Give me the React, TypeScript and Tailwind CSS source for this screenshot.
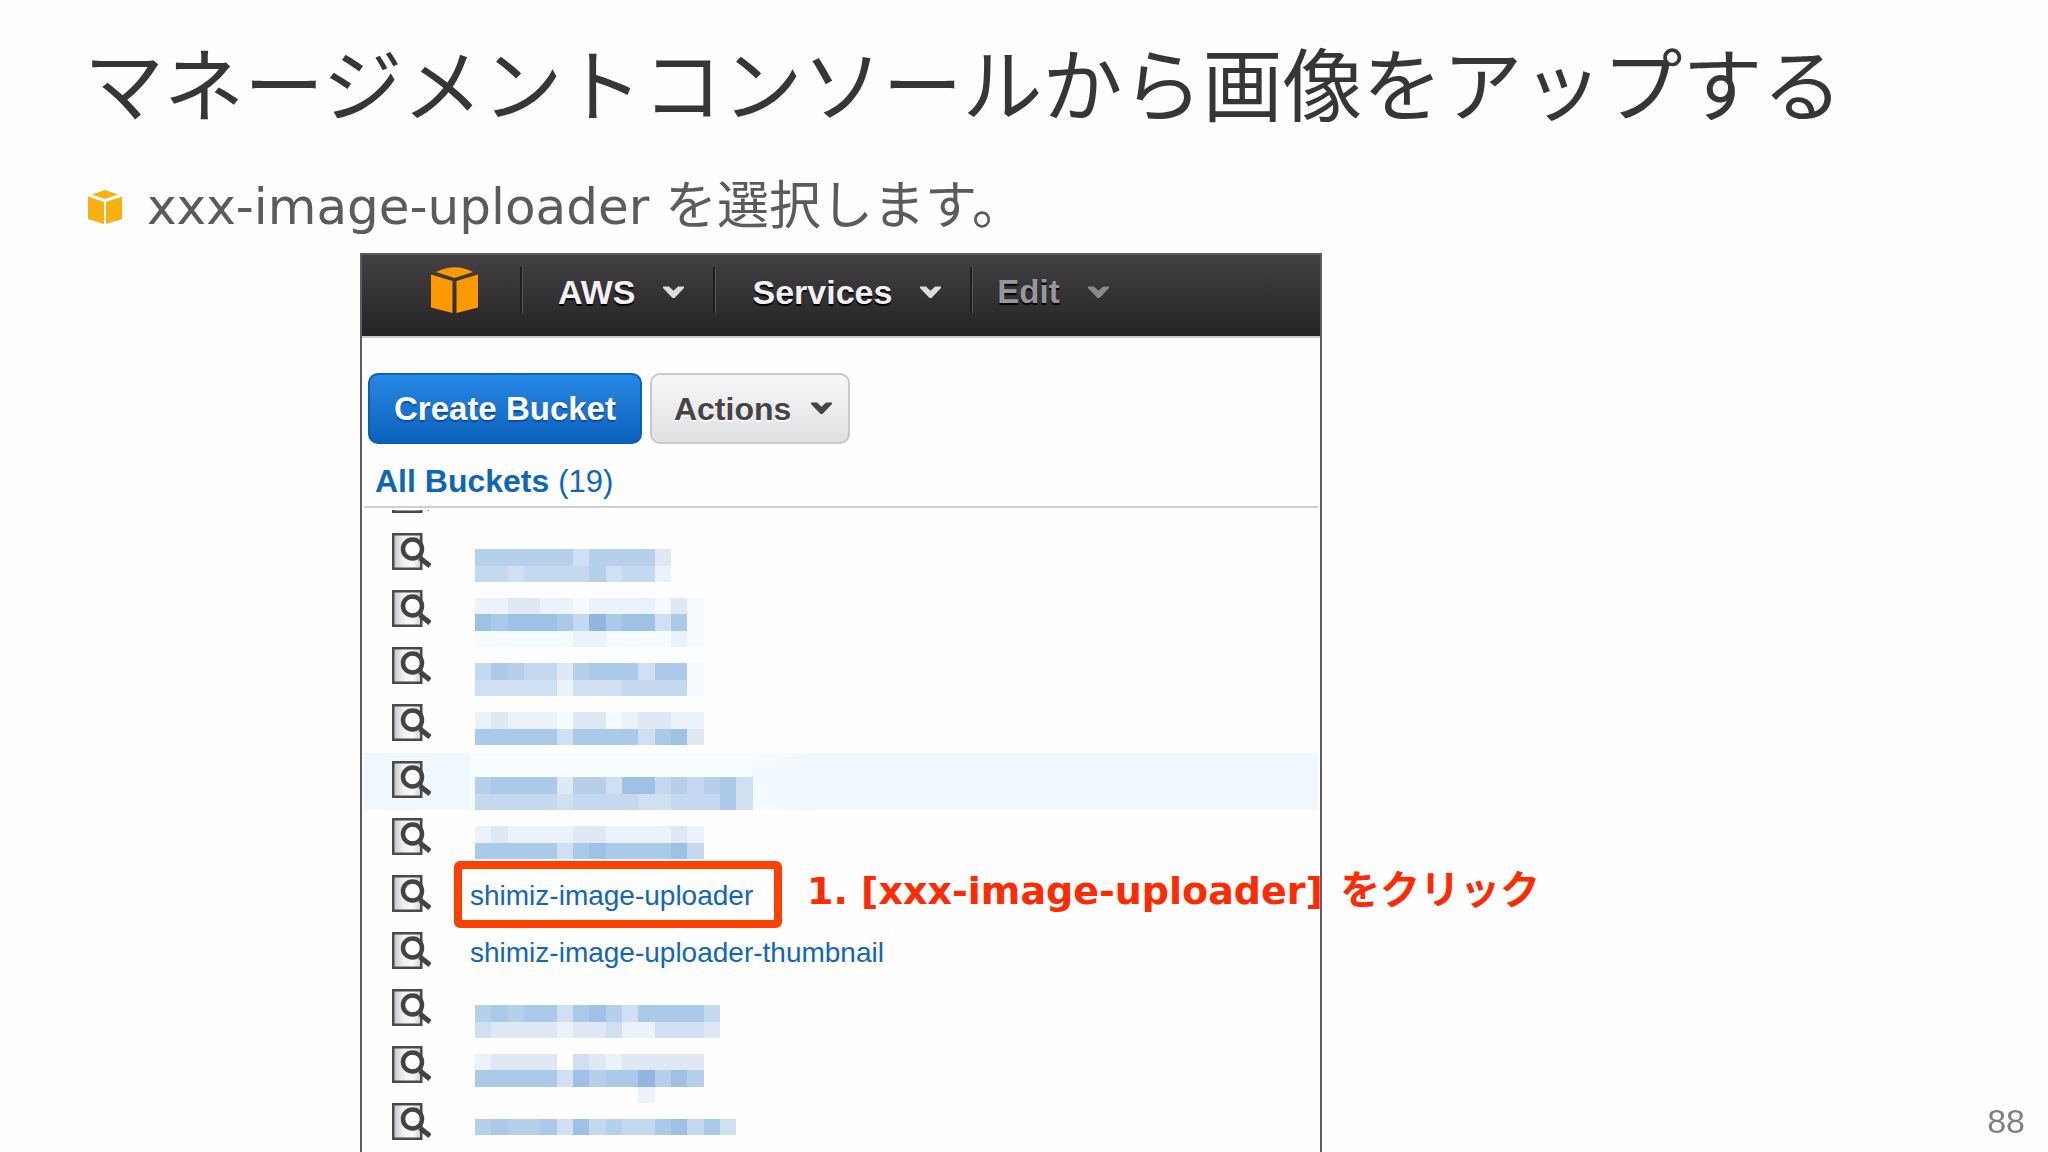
import type { ReactNode } from "react";

const JP = "font-['DejaVu_Sans','Noto_Sans_CJK_JP',sans-serif]";
const UI = "font-['Liberation_Sans',sans-serif]";

function CubeIcon({ className }: { className: string }) {
  return (
    <svg viewBox="0 0 47 46" className={className} fill="currentColor" aria-hidden="true">
      <path d="M5 5 Q14 0.300 24 0.300 Q33 0.300 42 5 L23.500 11 Z" />
      <path d="M0 7.500 L21.500 14 V46 L0 40.500 Z" />
      <path d="M47 7.500 L25.500 14 V46 L47 40.500 Z" />
    </svg>
  );
}

function BulletIcon() {
  return (
    <svg viewBox="0 0 34 34" className="h-[34px] w-[34px] shrink-0 text-[#f9b012]" fill="currentColor" aria-hidden="true">
      <path d="M4 4.500 L17 0 L30 4.500 L17 9 Z" />
      <path d="M0 6.500 L16 12 V34 L0 29 Z" />
      <path d="M34 6.500 L18 12 V34 L34 29 Z" />
    </svg>
  );
}

function Chevron({ className = "" }: { className?: string }) {
  return (
    <svg viewBox="0 0 21 13" className={`h-[13px] w-[21px] shrink-0 ${className}`} fill="currentColor" aria-hidden="true">
      <path d="M0 0.500 H6 L10.500 4.800 L15 0.500 H21 V2 L11.500 12 H9.500 L0 2 Z" />
    </svg>
  );
}

function InspectIcon() {
  return (
    <svg viewBox="0 0 39 38" className="h-[38px] w-[39px]" aria-hidden="true">
      <defs>
        <linearGradient id="sheet" x1="0" y1="0" x2="1" y2="0">
          <stop offset="0" stopColor="#c4c4c7" />
          <stop offset="0.350" stopColor="#f0f0f1" />
          <stop offset="0.700" stopColor="#fafafa" />
          <stop offset="1" stopColor="#cdcdd0" />
        </linearGradient>
      </defs>
      <rect x="1.250" y="1.250" width="28" height="34.500" fill="url(#sheet)" stroke="#4a4a4c" strokeWidth="2.500" />
      <path d="M28 25 L38 33" stroke="#434345" strokeWidth="5" />
      <circle cx="20.500" cy="16" r="9.500" fill="#fdfdfd" stroke="#434345" strokeWidth="4.500" />
    </svg>
  );
}

/* Pixelated bucket names: one string per row of cells, one palette letter per cell. */
const PALETTE: Record<string, string> = {
  a: "#f5fafe",
  b: "#ebf2fc",
  c: "#dfe8f5",
  d: "#d0e0f2",
  e: "#c4d9f0",
  f: "#b6d0eb",
  g: "#abc9e9",
  h: "#a0c1e6",
  i: "#90b5df",
};

function Mosaic({ rows }: { rows: string[] }) {
  return (
    <svg
      viewBox={`0 0 18 ${rows.length}`}
      preserveAspectRatio="none"
      shapeRendering="crispEdges"
      className={`w-[294px] ${rows.length === 3 ? "h-[49px]" : rows.length === 2 ? "h-[33px]" : "h-4"}`}
      role="img"
      aria-label="Hidden bucket name"
    >
      {rows.map((row, y) =>
        row.split("").map((c, x) =>
          c === "." ? null : <rect key={`${x}-${y}`} x={x} y={y} width="1" height="1" fill={PALETTE[c]} />,
        ),
      )}
    </svg>
  );
}

type Bucket =
  | { kind: "hidden"; high: boolean; rows: string[]; active?: boolean }
  | { kind: "named"; name: string; marked?: boolean };

const buckets: Bucket[] = [
  { kind: "hidden", high: false, rows: ["."] },
  { kind: "hidden", high: false, rows: ["ffffffdffffc", "eedeeeefdeeb"] },
  { kind: "hidden", high: true, rows: ["bbccbbabbbbaca", "hghhhgeighhdga", "aaaaaabbaaaaba"] },
  { kind: "hidden", high: false, rows: ["egfeecfgggdgga", "dddddbdddeeeea"] },
  { kind: "hidden", high: true, rows: ["bcbbbaccabccbb", "gggggdggggdghc"] },
  { kind: "hidden", high: false, active: true, rows: ["fggggcffdhhefefgd", "eeeeedeeeeddeeegd"] },
  { kind: "hidden", high: true, rows: ["bcbbbbccbbbbcb", "gggggdghgggghe"] },
  { kind: "named", name: "shimiz-image-uploader", marked: true },
  { kind: "named", name: "shimiz-image-uploader-thumbnail" },
  { kind: "hidden", high: false, rows: ["fgfggdghfdgggge", "dccccbccdbbdddc"] },
  { kind: "hidden", high: true, rows: ["bcccc.dcbccccc", "ggggg" + "dhfggifhf", "..........b..."] },
  { kind: "hidden", high: false, rows: ["fgffgdhefeeghegd"] },
];

function BucketRow({ bucket }: { bucket: Bucket }) {
  const active = bucket.kind === "hidden" && bucket.active;
  let body: ReactNode;
  if (bucket.kind === "named") {
    body = (
      <div className="relative flex h-full items-center">
        <a href="#bucket" className="text-[28px] leading-8 text-[#1166bb]">
          {bucket.name}
        </a>
        {bucket.marked && (
          <>
            <div className="pointer-events-none absolute -top-[6px] -left-4 h-[67px] w-[328px] rounded-md border-8 border-[#ff4000]" />
            <p className={`absolute -top-[2px] left-[337px] text-[38px] leading-[50px] font-bold whitespace-nowrap text-[#ff2a00] ${JP}`}>
              1. [xxx-image-uploader] <span className="ml-1 text-[40px]">をクリック</span>
            </p>
          </>
        )}
      </div>
    );
  } else {
    body = (
      <div
        className={`h-full pl-[5px] ${bucket.high ? "pt-4" : "pt-6"} ${
          active ? "w-[340px] bg-linear-to-r from-[#f6fdff] from-80% to-[#f0f8ff]" : ""
        }`}
      >
        <Mosaic rows={bucket.rows} />
      </div>
    );
  }
  return (
    <li className={`flex h-[57px] shrink-0 ${active ? "bg-[#f0f8ff]" : ""}`}>
      <div className="w-[106px] shrink-0 pt-2 pl-7">
        <InspectIcon />
      </div>
      {body}
    </li>
  );
}

function NavItem({ label, muted = false }: { label: string; muted?: boolean }) {
  return (
    <button
      type="button"
      className={`flex items-center gap-7 pt-1 leading-10 font-bold [text-shadow:0_2px_1px_#000] ${
        muted ? "text-[33px] text-[#98979a]" : "text-[34px] text-[#f1f0f2]"
      }`}
    >
      {label}
      <Chevron className={muted ? "text-[#8a898c]" : "text-[#dcdbde]"} />
    </button>
  );
}

function Divider() {
  return <span className="h-[46px] w-[3px] border-l-2 border-[#1e1d1f] bg-[#59585b]" />;
}

export default function App() {
  return (
    <main className="flex h-screen flex-col overflow-hidden bg-[#fefefe]">
      <h1 className="pt-[34px] pl-[84px] font-['Noto_Sans_CJK_JP',sans-serif] text-[80px] leading-[92px] whitespace-nowrap text-[#363636]">
        マネージメントコンソールから画像をアップする
      </h1>
      <ul className="mt-[51px] pl-[88px]">
        <li className="flex items-center gap-[25px]">
          <BulletIcon />
          <span className={`text-[50px] leading-[60px] whitespace-nowrap text-[#5b5b5b] ${JP}`}>
            xxx-image-uploader <span className="text-[52px] leading-[50px]">を選択します。</span>
          </span>
        </li>
      </ul>

      <section className={`mt-4 mr-[726px] ml-[360px] flex min-h-0 flex-1 flex-col border-x-2 border-t-2 border-[#5c5b5e] bg-[#fefefe] ${UI}`}>
        <header className="flex h-[83px] shrink-0 items-start border-b-2 border-[#c9c8cb] bg-linear-to-b from-[#434144] to-[#252326] pt-3 pl-[69px]">
          <CubeIcon className="h-[46px] w-[47px] shrink-0 text-[#ff9900]" />
          <nav className="ml-[42px] flex h-[46px] items-center">
            <Divider />
            <div className="pr-[29px] pl-[35px]">
              <NavItem label="AWS" />
            </div>
            <Divider />
            <div className="pr-[29px] pl-9">
              <NavItem label="Services" />
            </div>
            <Divider />
            <div className="pl-6">
              <NavItem label="Edit" muted />
            </div>
          </nav>
        </header>

        <div className="flex gap-2 pt-[35px] pl-[6px]">
          <button
            type="button"
            className="h-[71px] rounded-[10px] border-2 border-[#0a5fb8] bg-linear-to-b from-[#2787e4] to-[#0b62bd] px-6 text-[33px] leading-10 font-bold text-white [text-shadow:0_2px_1px_#0a4f9a]"
          >
            Create Bucket
          </button>
          <button
            type="button"
            className="flex h-[71px] items-center gap-5 rounded-[10px] border-2 border-[#c9c8cb] bg-linear-to-b from-[#f7f6f8] to-[#e1e0e3] pr-4 pl-[22px] text-[32px] leading-10 font-bold text-[#454446] [text-shadow:0_2px_0_#fff]"
          >
            Actions
            <Chevron />
          </button>
        </div>

        <h2 className="mx-[2px] mt-4 flex h-12 items-center border-b-2 border-[#d0cfd2] pb-[3px] pl-[11px] text-[32px] leading-10 text-[#0f66b9]">
          <a href="#all">
            <strong>All Buckets</strong> <span className="text-[31px]">(19)</span>
          </a>
        </h2>

        <div className="mx-[2px] mt-[2px] min-h-0 flex-1 [clip-path:inset(0_-300px_0_0)]">
          <ul className="-mt-[42px] flex flex-col">
            {buckets.map((b, i) => (
              <BucketRow key={i} bucket={b} />
            ))}
          </ul>
        </div>
      </section>

      <footer className={`fixed right-[23px] bottom-[11px] text-[34px] leading-10 text-[#808080] ${UI}`}>88</footer>
    </main>
  );
}
